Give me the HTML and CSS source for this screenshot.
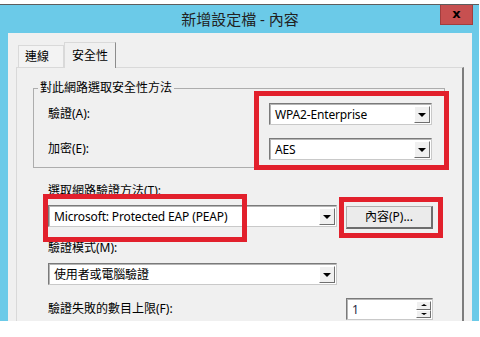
FILE: index.html
```html
<!DOCTYPE html>
<html lang="zh-Hant">
<head>
  <meta charset="UTF-8">
  <title>新增設定檔 - 內容</title>
  <link rel="stylesheet" href="styles.css">
</head>
<body>
  <div class="window">
    <div class="titlebar">新增設定檔 - 內容</div>
    <div class="close-btn">x</div>

    <div class="panel">
      <div class="tabs">
        <div class="tab">連線</div>
        <div class="tab active">安全性</div>
      </div>

      <div class="tab-page">
        <fieldset class="group">
          <legend>對此網路選取安全性方法</legend>
          <div class="group-grid">
            <div class="label">驗證(A):</div>
            <div class="combo small">
              <span class="combo-text">WPA2-Enterprise</span>
              <span class="arrow"></span>
            </div>
            <div class="label">加密(E):</div>
            <div class="combo small">
              <span class="combo-text">AES</span>
              <span class="arrow"></span>
            </div>
          </div>
        </fieldset>

        <div class="section">
          <div class="label label-method">選取網路驗證方法(T):</div>
          <div class="row">
            <div class="combo wide">
              <span class="combo-text">Microsoft: Protected EAP (PEAP)</span>
              <span class="arrow"></span>
            </div>
            <div class="btn">內容(P)...</div>
          </div>

          <div class="label label-mode">驗證模式(M):</div>
          <div class="combo wide">
            <span class="combo-text">使用者或電腦驗證</span>
            <span class="arrow"></span>
          </div>

          <div class="row row-limit">
            <div class="label wide">驗證失敗的數目上限(F):</div>
            <div class="spin">
              <span class="spin-text">1</span>
              <span class="spin-btns">
                <span class="spin-btn"><span class="up"></span></span>
                <span class="spin-btn"><span class="down"></span></span>
              </span>
            </div>
          </div>
        </div>
      </div>
    </div>
  </div>

  <!-- annotation boxes drawn over the dialog -->
  <div class="mark mark-1"></div>
  <div class="mark mark-2"></div>
  <div class="mark mark-3"></div>
</body>
</html>
```

FILE: styles.css
```css
/* Windows 8 style dialog, zh-TW */
body {
  margin: 0;
  background: #fff;
  font-family: 'Noto Sans', 'Noto Sans CJK TC', sans-serif;
  font-size: 12px;
  color: #000;
  position: relative;
  height: 337px;
  overflow: hidden;
}

.window {
  position: relative;
  margin-top: 4px;
  border-top: 1px solid #5d5d5d;
  width: 479px;
  height: 317px;
  box-sizing: border-box;
  padding: 0 7px 0 8px;
  background: #6bcae8;
  overflow: hidden;
}

.titlebar {
  height: 28px;
  line-height: 28px;
  text-align: center;
  font-size: 15px;
  color: #222;
}

.close-btn {
  position: absolute;
  top: 0;
  right: 6px;
  width: 33px;
  height: 20px;
  box-sizing: border-box;
  background: #c75050;
  border: 1px solid #a23e3e;
  border-top: none;
  color: #000;
  font-family: 'DejaVu Sans', sans-serif;
  font-weight: bold;
  font-size: 13px;
  line-height: 18px;
  text-align: center;
}

.panel {
  background: #f0f0f0;
  height: 300px;
  padding: 8px 8px 0 8px;
}

.tabs {
  display: flex;
  align-items: flex-end;
  margin-left: 2px;
  height: 26px;
}

.tab {
  height: 22px;
  box-sizing: border-box;
  width: 46px;
  padding-left: 6px;
  line-height: 22px;
  border: 1px solid #d9d9d9;
  border-bottom: none;
  background: #f3f3f3;
}

.tab.active {
  position: relative;
  height: 26px;
  width: 52px;
  padding-left: 7px;
  line-height: 26px;
  border-right: 1px solid #8c8c8c;
  margin-bottom: -1px;
  background: #f0f0f0;
  z-index: 1;
}

.tab-page {
  border: 1px solid #d9d9d9;
  border-right: 2px solid #7d7d7d;
  height: 280px;
  padding: 13px 17px 0 16px;
}

/* group box */
.group {
  margin: 0;
  padding: 8px 12px 7px 4px;
  border: 1px solid #adadad;
}

.group legend {
  padding: 0 2px;
  margin-left: 0;
  line-height: 14px;
}

.group-grid {
  margin-left: 10px;
  display: grid;
  grid-template-columns: 1fr 163px;
  row-gap: 13px;
  align-items: center;
}

.label {
  line-height: 14px;
}

/* combo boxes */
.combo {
  display: flex;
  height: 22px;
  box-sizing: border-box;
  background: #fff;
  border: 1px solid;
  border-color: #7a7a7a #c9c9c9 #c9c9c9 #7a7a7a;
  box-shadow: inset 1px 1px 0 #b5b5b5;
  padding: 2px 1px 1px 2px;
}

.combo.small {
  width: 163px;
}

.combo.wide {
  width: 289px;
}

.combo-text {
  flex: 1;
  padding-left: 3px;
  line-height: 17px;
  letter-spacing: -0.15px;
  white-space: nowrap;
  overflow: hidden;
}

.arrow {
  width: 16px;
  box-sizing: border-box;
  background: #f0f0f0;
  border: 1px solid;
  border-color: #fff #6f6f6f #6f6f6f #fff;
  display: flex;
  align-items: center;
  justify-content: center;
}

.arrow::after {
  content: '';
  border-left: 4px solid transparent;
  border-right: 4px solid transparent;
  border-top: 4px solid #000;
}

.section {
  margin-left: 15px;
}

.label-method {
  margin-top: 16px;
}

.row {
  display: flex;
  align-items: flex-start;
  column-gap: 9px;
  margin-top: 7px;
}

.btn {
  width: 87px;
  height: 23px;
  margin-top: 1px;
  box-sizing: border-box;
  background: #ebebeb;
  border: 1px solid #adadad;
  border-right: 2px solid #6d6d6d;
  border-bottom: 2px solid #6d6d6d;
  text-align: center;
  line-height: 20px;
}

.label-mode {
  margin: 12px 0 8px;
}

.row-limit {
  margin-top: 13px;
  align-items: center;
}

.label.wide {
  width: 289px;
}

/* spin box */
.spin {
  display: flex;
  width: 87px;
  height: 22px;
  box-sizing: border-box;
  background: #fff;
  border: 1px solid;
  border-color: #7a7a7a #c9c9c9 #c9c9c9 #7a7a7a;
  box-shadow: inset 1px 1px 0 #b5b5b5;
  padding: 2px 1px 1px 2px;
}

.spin-text {
  flex: 1;
  padding-left: 3px;
  line-height: 17px;
  color: #1f2a44;
}

.spin-btns {
  display: flex;
  flex-direction: column;
  width: 15px;
}

.spin-btn {
  flex: 1;
  background: #f0f0f0;
  border: 1px solid;
  border-color: #fff #6f6f6f #6f6f6f #fff;
  display: flex;
  align-items: center;
  justify-content: center;
}

.up {
  border-left: 3px solid transparent;
  border-right: 3px solid transparent;
  border-bottom: 2px solid #000;
}

.down {
  border-left: 3px solid transparent;
  border-right: 3px solid transparent;
  border-top: 2px solid #000;
}

/* red annotation frames */
.mark {
  position: absolute;
  border: 5px solid #e2202c;
  box-sizing: border-box;
}

.mark-1 {
  left: 254px;
  top: 91px;
  width: 195px;
  height: 79px;
}

.mark-2 {
  left: 43px;
  top: 194px;
  width: 204px;
  height: 48px;
}

.mark-3 {
  left: 339px;
  top: 197px;
  width: 104px;
  height: 41px;
}
```
